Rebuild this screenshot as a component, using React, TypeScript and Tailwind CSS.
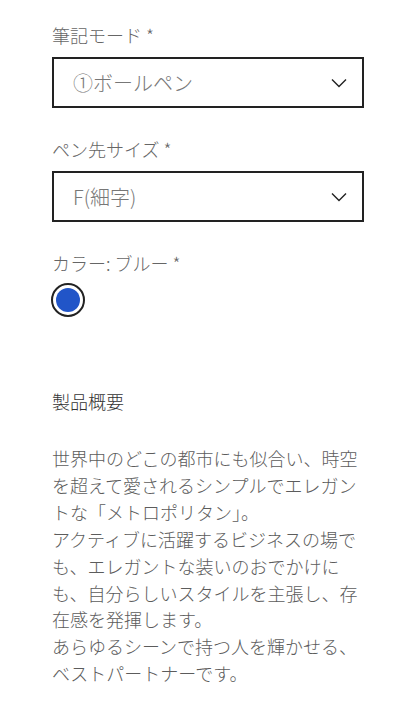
import React from "react";

const font = { fontFamily: '"Noto Sans CJK JP", "Noto Sans", sans-serif' };

function Chevron() {
  return (
    <svg width="16" height="10" viewBox="0 0 16 10" fill="none" className="shrink-0">
      <path d="M1 1.5 L8 8.5 L15 1.5" stroke="#222" strokeWidth="1.4" />
    </svg>
  );
}

function SelectField({ label, value }: { label: string; value: string }) {
  return (
    <div className="flex flex-col">
      <div className="text-[18px] leading-[26px] text-[#666] font-light mb-[9px]">{label}</div>
      <div className="h-[51px] border-2 border-[#222] flex items-center justify-between pl-[19px] pr-[15px]">
        <span className="text-[20px] text-[#777] font-light">{value}</span>
        <Chevron />
      </div>
    </div>
  );
}

export default function App() {
  const lines = [
    "世界中のどこの都市にも似合い、時空を超えて愛されるシンプルでエレガントな「メトロポリタン」。",
    "アクティブに活躍するビジネスの場でも、エレガントな装いのおでかけにも、自分らしいスタイルを主張し、存在感を発揮します。",
    "あらゆるシーンで持つ人を輝かせる、ベストパートナーです。",
  ];
  return (
    <div className="w-[416px] h-[708px] bg-white overflow-hidden" style={font}>
      <div className="pl-[52px] pr-[52px] pt-[22px] flex flex-col">
        <SelectField label="筆記モード *" value="①ボールペン" />
        <div className="mt-[28px]">
          <SelectField label="ペン先サイズ *" value="F(細字)" />
        </div>
        <div className="mt-[28px] text-[18px] leading-[26px] text-[#666] font-light">カラー: ブルー *</div>
        <div className="mt-[7px] w-[34px] h-[34px] rounded-full border-2 border-[#222] p-[3px] -ml-[1px]">
          <div className="w-full h-full rounded-full bg-[#2155c8]" />
        </div>
        <div className="mt-[71px] text-[18px] leading-[26px] text-[#333] font-light">製品概要</div>
        <div className="mt-[31px] text-[18px] leading-[26.9px] text-[#5c5c5c] font-light break-all">
          {lines.map((l, i) => (
            <p key={i}>{l}</p>
          ))}
        </div>
      </div>
    </div>
  );
}
